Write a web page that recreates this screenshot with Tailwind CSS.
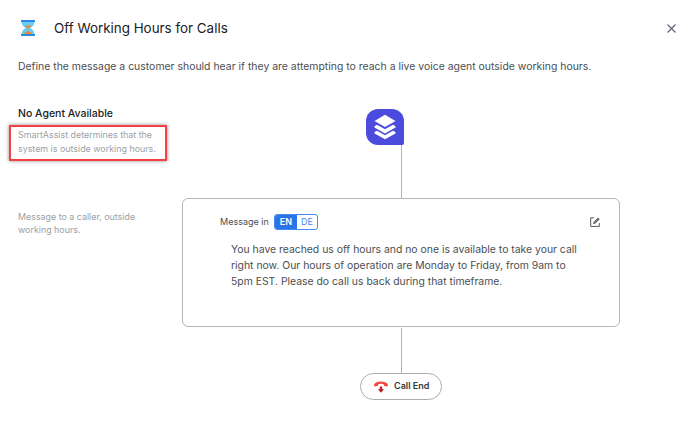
<!DOCTYPE html>
<html lang="en">
<head>
<meta charset="utf-8">
<title>Off Working Hours for Calls</title>
<script src="https://cdn.jsdelivr.net/npm/@tailwindcss/browser@4"></script>
</head>
<body class="h-[445px] w-[700px] overflow-hidden bg-white font-['Inter',sans-serif] text-[#4b4e52]">
<header class="flex h-14 items-center pl-5 pr-6">
  <svg class="h-4 w-4 shrink-0" viewBox="0 0 16 16">
    <path d="M1.500 1h13c0 4-2 5.600-4.500 7 2.500 1.400 4.500 3 4.500 7h-13c0-4 2-5.600 4.500-7C3.500 6.600 1.500 5 1.500 1z" fill="#68cdf5"/>
    <path d="M4.500 5.500c2 .7 5-.5 7 0C11 7 9.500 7.500 8 8 6.500 7.500 5 7 4.500 5.500zM4 14c.5-1.600 2-2.700 4-2.700s3.500 1.100 4 2.700z" fill="#e58a32"/>
    <path d="M7.500 8h1v3.500h-1z" fill="#b5a184"/>
    <path d="M1 0h14v2H1zM1 14h14v2H1z" fill="#2f88df"/>
  </svg>
  <h1 class="ml-[18px] flex-1 whitespace-nowrap text-[13.400px] leading-5 text-[#202124]">Off Working Hours for Calls</h1>
  <svg class="mt-px h-[9px] w-[9px]" viewBox="0 0 9 9" fill="none" stroke="#596174" stroke-width="1.100"><path d="M.5.5l8 8M8.500.5l-8 8"/></svg>
</header>
<p class="h-[53px] whitespace-nowrap pl-[18px] pt-[3px] text-[10.400px] leading-4 tracking-[0.025px]">Define the message a customer should hear if they are attempting to reach a live voice agent outside working hours.</p>
<main class="flex">
  <aside class="w-[182px] pl-[9px]">
    <h2 class="h-4 whitespace-nowrap pl-[9px] text-[10.500px] font-medium leading-[10px] text-[#202124]">No Agent Available</h2>
    <div class="h-[36px] w-[158px] whitespace-nowrap border-2 border-[#f83f43] pl-[7px] pt-px text-[8.900px] leading-[14px] text-[#9a9fa6] shadow-[0_0_4px_rgba(0,0,0,0.45)]">SmartAssist determines that the<br>system is outside working hours.</div>
    <p class="mt-[49px] whitespace-nowrap pl-[9px] text-[8.900px] leading-[13px] text-[#9a9fa6]">Message to a caller, outside<br>working hours.</p>
  </aside>
  <section class="flex w-[438px] flex-col">
    <div class="ml-[184px] flex h-9 w-[38px] items-center justify-center rounded-[12px] rounded-br-[2px] bg-[#4b4cdd]">
      <svg class="h-[26px] w-[22px]" viewBox="0 0 22 26" fill="#fff"><path d="M11 .8 21.500 7 11 13 .5 7z"/><path d="M.5 12.200 3 10.800l8 4.500 8-4.500 2.500 1.400v1.400L11 19.500.5 13.600z"/><path d="M.5 18.100 3 16.700l8 4.500 8-4.500 2.500 1.400v1.400L11 25.300.5 19.500z"/></svg>
    </div>
    <div class="ml-[219px] h-[53px] w-px bg-[#b0b3b8]"></div>
    <article class="h-[129px] rounded-[6px] border border-[#b3b7bc] pl-[37px] pr-[19px] pt-[15px]">
      <div class="flex h-4 items-center">
        <span class="w-[54px] whitespace-nowrap text-[9px] leading-3">Message in</span>
        <div class="flex h-4 w-11 overflow-hidden rounded-[3px] border border-[#428af1] text-[9px] leading-[14px]">
          <span class="w-[22px] bg-[#2874e8] text-center font-semibold text-white">EN</span>
          <span class="flex-1 text-center text-[#4288ee]">DE</span>
        </div>
        <svg class="ml-auto h-[10px] w-[10px]" viewBox="0 0 10 10" fill="none" stroke="#555"><path d="M4 .8H.7v8.600h8.600V6"/><path d="M3.500 6.700 4 4.900 8 .9 9.300 2.200l-4 4z" fill="#777" stroke-width=".8"/></svg>
      </div>
      <p class="ml-[11px] mt-3 whitespace-nowrap text-[10.400px] leading-4">You have reached us off hours and no one is available to take your call<br>right now. Our hours of operation are Monday to Friday, from 9am to<br>5pm EST. Please do call us back during that timeframe.</p>
    </article>
    <div class="ml-[219px] mt-px h-[45px] w-px bg-[#b0b3b8]"></div>
    <div class="ml-[178px] flex h-[27px] w-[82px] items-center rounded-full border border-[#a9adb4] pl-[13px]">
      <svg class="h-3 w-[14px]" viewBox="0 0 14 12"><path d="M0 3.700C1.500-.5 12.500-.5 14 3.700c.3 1-.5 1.800-1.300 1.700l-2-.5c-.7-.2-1-.7-1-1.700C8 2.500 6 2.500 4.300 3.200c0 1-.3 1.500-1 1.700l-2 .5C.5 5.500-.3 4.700 0 3.700z" fill="#f44a43"/><path d="M5.800 5.500h2.400v2.700h1.900L7 11.700 3.900 8.200h1.900z" fill="#b6202c"/></svg>
      <span class="mb-px ml-[6px] whitespace-nowrap text-[9px] font-semibold leading-3 text-[#34373c]">Call End</span>
    </div>
  </section>
</main>
</body>
</html>
